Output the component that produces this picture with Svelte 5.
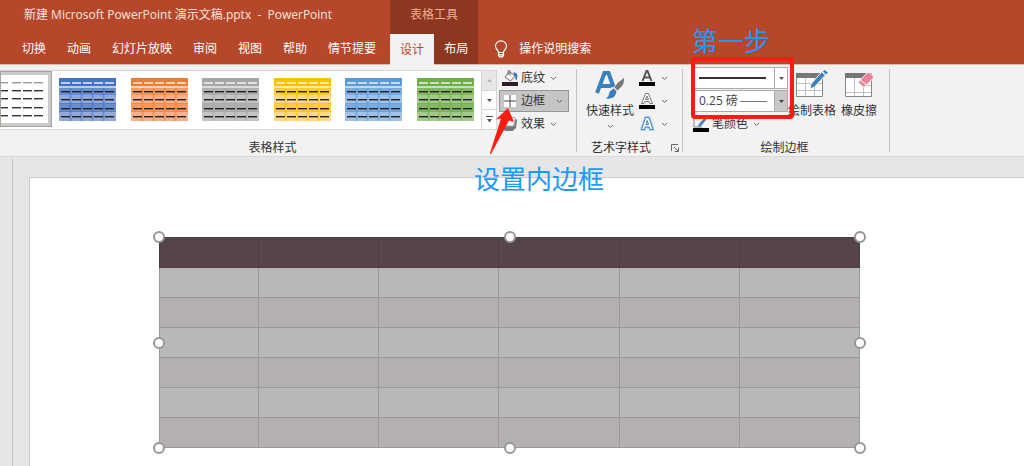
<script>
  const menus = ['切换', '动画', '幻灯片放映', '审阅', '视图', '帮助', '情节提要'];

  const styles = [
    { name: '蓝色', head: '#4472c4', odd: '#698ed0', even: '#93a9dc' },
    { name: '橙色', head: '#ed7d31', odd: '#f79a5e', even: '#f8b08c' },
    { name: '灰色', head: '#a5a5a5', odd: '#b0b0b0', even: '#c4c4c4' },
    { name: '金色', head: '#ffc000', odd: '#ffcb3c', even: '#ffd98a' },
    { name: '浅蓝', head: '#5b9bd5', odd: '#79ace0', even: '#a0c1e8' },
    { name: '绿色', head: '#70ad47', odd: '#82b962', even: '#a2cb8b' },
  ];

  const dashRows = [13, 21, 30, 38];
  const dashCols = [2, 13, 24, 35, 46];

  // handle positions in percent of the selected table
  const handles = [
    [0, 0], [50, 0], [100, 0],
    [0, 50], [100, 50],
    [0, 100], [50, 100], [100, 100],
  ];

  let selected = $state(-1);
  let penStyle = $state('solid');
  let penWidth = $state('0.25');
</script>

{#snippet chevron()}
  <svg class="chevron" width="7" height="5" viewBox="0 0 7 5" aria-hidden="true">
    <path d="M1 1l2.5 2.4L6 1" fill="none" stroke="#666" />
  </svg>
{/snippet}

<div class="window">
  <header>
    <div class="main-bar">
      <div class="title">新建 Microsoft PowerPoint 演示文稿.pptx &nbsp;-&nbsp; PowerPoint</div>
      <nav class="menus">
        {#each menus as menu}
          <button class="menu">{menu}</button>
        {/each}
      </nav>
    </div>
    <div class="context">
      <div class="context-title">表格工具</div>
      <div class="context-tabs">
        <button class="tab active">设计</button>
        <button class="tab">布局</button>
      </div>
    </div>
    <button class="search">
      <svg width="14" height="18" viewBox="0 0 14 18" fill="none" stroke="#fff" stroke-width="1.2" aria-hidden="true">
        <path d="M4.5 12.5C4.5 10 1.5 9.500 1.500 6a5.500 5.200 0 0 1 11 0c0 3.500-3 4-3 6.500v3l-1 1.300h-3l-1-1.300zM4.500 12.500h5M4.500 14.800h5" />
      </svg>
      操作说明搜索
    </button>
  </header>

  <div class="ribbon">
    <section class="group styles-group">
      <div class="tools">
        <div class="gallery">
          <button class="thumb current" aria-label="无样式" onclick={() => (selected = -1)}>
            <svg width="44" height="43" viewBox="0 0 44 43" aria-hidden="true">
              {#each [5, ...dashRows] as y, i}
                {#each [0, 12, 23, 34] as x}
                  <rect {x} {y} width={x ? 9 : 8} height="1.4" fill={i ? '#333' : '#999'} />
                {/each}
              {/each}
            </svg>
          </button>
          <div class="thumbs">
            {#each styles as style, i}
              <button class="thumb" aria-label={style.name} aria-pressed={selected === i} onclick={() => (selected = i)}>
                <svg width="57" height="43" viewBox="0 0 57 43" aria-hidden="true">
                  <rect width="57" height="43" fill={style.odd} />
                  <rect y="17" width="57" height="8" fill={style.even} />
                  <rect y="34" width="57" height="9" fill={style.even} />
                  <rect width="57" height="8" fill={style.head} />
                  <rect y="8" width="57" height="2" fill="#fff" opacity=".55" />
                  {#each [11.5, 22.5, 33.5, 44.5] as x}
                    <path d="M{x} 10v33" stroke={style.head} stroke-width="2" opacity=".5" />
                  {/each}
                  <path d="M0 25.500h57M0 33.500h57" stroke={style.head} opacity=".5" />
                  {#each dashCols as x}
                    <rect {x} y="4" width="9" height="2" fill="#fff" opacity=".65" />
                    {#each dashRows as y}
                      <rect {x} {y} width="9" height="1.400" fill="#222" />
                    {/each}
                  {/each}
                </svg>
              </button>
            {/each}
          </div>
          <div class="scroll">
            <button class="off" aria-label="上一行"><svg width="5" height="3" aria-hidden="true"><path d="M0 3h5L2.500 0z" fill="#b5b5b5" /></svg></button>
            <button aria-label="下一行"><svg width="5" height="3" aria-hidden="true"><path d="M0 0h5L2.500 3z" fill="#555" /></svg></button>
            <button aria-label="其他"><svg width="7" height="7" aria-hidden="true"><path d="M0 0h7v1H0zM1 3h5L3.500 6.500z" fill="#555" /></svg></button>
          </div>
        </div>
        <div class="stack">
          <button class="row-button">
            <svg width="17" height="16" viewBox="0 0 17 16" aria-hidden="true">
              <path d="M7.500 1.800l5.500 4.200-4.500 5-5.500-4z" fill="#fff" stroke="#666" />
              <path d="M6 5V1.500Q6 .5 7 .5t1 1V5.500" fill="none" stroke="#666" />
              <path d="M11 2.500q4-.5 4.300 2.500.3 3-.8 5.500-1.700-1.500-1.300-4.500z" fill="#3f78b5" />
              <path d="M0 12h16v4H0z" fill="#351c2b" />
            </svg>
            <span>底纹</span>{@render chevron()}
          </button>
          <button class="row-button pressed">
            <svg width="17" height="16" viewBox="0 0 17 16" aria-hidden="true">
              <path d="M1.500 1.500h13v13h-13z" fill="#fff" stroke="#aaa" stroke-dasharray="1 1" />
              <path d="M8 2v12M2 8h12" stroke="#444" />
            </svg>
            <span>边框</span>{@render chevron()}
          </button>
          <button class="row-button">
            <svg width="17" height="16" viewBox="0 0 17 16" aria-hidden="true">
              <path d="M5 2.500h8.500L15 4l-1 8-3.500 3H3l-2-2.500L2 9z" fill="#777" />
              <path d="M5.500 1.500h7q1 0 .8 1L12 9q-.2 1-1 1H4q-1 0-.8-1l1.300-6.500q.2-1 1-1z" fill="#fff" stroke="#aaa" />
            </svg>
            <span>效果</span>{@render chevron()}
          </button>
        </div>
      </div>
      <div class="caption">表格样式</div>
      <svg class="arrow" width="28" height="50" viewBox="0 0 28 50" aria-hidden="true">
        <path d="M20 2l6 14-5-1.500L3.500 47q-1.500 2-1.500 0L13 12.500 8 13.500z" fill="#ff1b10" />
      </svg>
    </section>

    <section class="group wordart">
      <div class="tools">
        <button class="big-button">
          <svg width="30" height="30" viewBox="0 0 30 30" aria-hidden="true">
            <path d="M2 23L9.500 3h4l5 14M5 16h11" fill="none" stroke="#3d7ebd" stroke-width="4" />
            <path d="M29 8q.5 5-2.500 8.500l-4 4-3-3 3-4.500z" fill="#777" />
            <path d="M18.500 18l3.500 3q-1 6-5 7.500t-7.500 0q4-1.500 4-4.500t5-6z" fill="#3d7ebd" stroke="#f2f2f2" />
          </svg>
          <span>快速样式</span>
          {@render chevron()}
        </button>
        <div class="stack">
          <button class="row-button" aria-label="文本填充">
            <svg width="17" height="16" viewBox="0 0 17 16" aria-hidden="true">
              <path d="M3.500 11L7.500 1h1l4 10M5 7.500h6" fill="none" stroke="#555" stroke-width="2" />
              <path d="M0 12h16v4H0z" />
            </svg>
            {@render chevron()}
          </button>
          <button class="row-button" aria-label="文本轮廓">
            <svg width="17" height="16" viewBox="0 0 17 16" aria-hidden="true">
              <path d="M2.500 10.500l4-10h3l4 10h-2.500l-.8-2H5.800l-.8 2zM6.500 6.500h3L8 3z" fill="#fff" stroke="#777" />
              <path d="M0 12h16v4H0z" />
            </svg>
            {@render chevron()}
          </button>
          <button class="row-button" aria-label="文本效果">
            <svg width="17" height="16" viewBox="0 0 17 16" aria-hidden="true">
              <path d="M2.500 13.500l4-12h3.500l4 12h-3l-.8-2.500H6.300l-.8 2.500z" fill="#fff" stroke="#b4d5f2" stroke-width="3" />
              <path d="M2.500 13.500l4-12h3.500l4 12h-3l-.8-2.500H6.300l-.8 2.500zM7 8.500h2.500L8.200 4.500z" fill="#fff" stroke="#3f7fbe" />
            </svg>
            {@render chevron()}
          </button>
        </div>
      </div>
      <div class="caption">艺术字样式</div>
      <button class="launcher" aria-label="艺术字样式设置">
        <svg width="8" height="8" viewBox="0 0 8 8" fill="none" stroke="#666" aria-hidden="true">
          <path d="M.5 7V.5H7M3 3l4 4M7.500 3.500v4h-4" />
        </svg>
      </button>
    </section>

    <section class="group borders">
      <div class="tools">
        <div class="stack pens">
          <div class="combo">
            <select class="pen-style" aria-label="笔样式" bind:value={penStyle}>
              <option value="solid"></option>
            </select>
            <span class="drop"><svg width="5" height="3" aria-hidden="true"><path d="M0 0h5L2.500 3z" fill="#555" /></svg></span>
          </div>
          <div class="combo">
            <select class="pen-width" aria-label="笔划粗细" bind:value={penWidth}>
              <option value="0.25">0.25 磅</option>
            </select>
            <span class="drop dark"><svg width="5" height="3" aria-hidden="true"><path d="M0 0h5L2.500 3z" fill="#444" /></svg></span>
          </div>
          <button class="row-button">
            <svg width="17" height="16" viewBox="0 0 17 16" aria-hidden="true">
              <path d="M1 1v10h8" fill="none" stroke="#888" />
              <path d="M13 0l2 1.500-7 8.500-3 1 1-3z" fill="#3f7fbe" />
              <path d="M0 12h16v4H0z" />
            </svg>
            <span>笔颜色</span>{@render chevron()}
          </button>
        </div>
        <button class="big-button draw">
          <svg width="32" height="30" viewBox="0 0 32 30" aria-hidden="true">
            <path d="M.5 4.500h26v22H.5z" fill="#fff" stroke="#888" />
            <path d="M1 13.500h25M1 20.500h25M9.500 8v18M18.500 8v18" stroke="#c0c0c0" />
            <path d="M0 3h27v5H0z" fill="#777" />
            <path d="M25.500 2l4 3-11 12-4.500 2 1-5z" fill="#3f7fbe" stroke="#f2f2f2" />
            <path d="M27 1.500L28.500 0 32 2.500l-2 2z" fill="#3f7fbe" />
          </svg>
          <span>绘制表格</span>
        </button>
        <button class="big-button">
          <svg width="30" height="30" viewBox="0 0 30 30" aria-hidden="true">
            <path d="M1.500 4.500h26v22h-26z" fill="#fff" stroke="#888" />
            <path d="M2 22.500h25M10.500 8v18M19.500 8v18M19 15.500h8" stroke="#c0c0c0" />
            <path d="M1 3h27v5H1z" fill="#777" />
            <path d="M23 3q1.500-1 3 0l3 2.500q1 1.500 0 3L20 17.500l-6-5z" fill="#ea8398" stroke="#f2f2f2" />
            <path d="M16.500 10l6 5" stroke="#fff" />
          </svg>
          <span>橡皮擦</span>
        </button>
      </div>
      <div class="caption">绘制边框</div>
      <div class="highlight"></div>
      <div class="note note-one">第一步</div>
    </section>
  </div>

  <main>
    <div class="note note-two">设置内边框</div>
    <div class="outline"></div>
    <div class="slide">
      <div class="selection">
        <table aria-label="幻灯片表格">
          <thead>
            <tr>{#each { length: 6 } as _}<th></th>{/each}</tr>
          </thead>
          <tbody>
            {#each { length: 6 } as _}
              <tr>{#each { length: 6 } as _}<td></td>{/each}</tr>
            {/each}
          </tbody>
        </table>
        {#each handles as [x, y]}
          <span class="handle" style="left: {x}%; top: {y}%"></span>
        {/each}
      </div>
    </div>
  </main>
</div>

<style>
  :global(body) {
    margin: 0;
  }
  .window {
    display: flex;
    flex-direction: column;
    min-height: 100vh;
    overflow: hidden;
    background: #e6e6e6;
    color: #333;
    font: 12px/16px "Open Sans", "Noto Sans CJK SC", sans-serif;
  }
  button {
    padding: 0;
    border: 0;
    background: none;
    color: inherit;
    font: inherit;
    white-space: nowrap;
  }
  svg {
    display: block;
    flex: none;
  }

  /* title bar and tabs */
  header {
    display: flex;
    background: #b7472a;
    border-bottom: 1px solid #e3b9ae;
    color: #fff;
  }
  .main-bar {
    padding: 0 14px 0 22px;
  }
  .title {
    padding: 7px 2px 11px;
    color: #fbe6df;
    white-space: nowrap;
  }
  .menus {
    display: flex;
    gap: 21px;
    height: 30px;
  }
  .context {
    background: #8e3720;
  }
  .context-title {
    padding: 7px 0 11px;
    color: #f0ac90;
    text-align: center;
  }
  .context-tabs {
    display: flex;
  }
  .tab {
    height: 30px;
    padding: 0 10px;
  }
  .tab.active {
    height: 31px;
    margin-bottom: -1px;
    background: #f2f2f2;
    color: #b7472a;
  }
  .search {
    display: flex;
    align-items: center;
    align-self: flex-end;
    gap: 11px;
    height: 30px;
    padding-left: 16px;
  }

  /* ribbon */
  .ribbon {
    display: flex;
    height: 91px;
    background: #f2f2f2;
    border-bottom: 1px solid #d9d9d9;
  }
  .group {
    position: relative;
    display: flex;
    flex-direction: column;
    padding-top: 2px;
  }
  .group::after {
    content: "";
    position: absolute;
    top: 4px;
    right: 0;
    bottom: 4px;
    width: 1px;
    background: #c3c3c3;
  }
  .tools {
    display: flex;
    height: 73px;
  }
  .caption {
    text-align: center;
  }
  .styles-group {
    width: 577px;
  }
  .styles-group .caption {
    padding-right: 32px;
  }
  .gallery {
    display: flex;
    flex: 1;
    height: 58px;
    margin: 3px 2px 0 0;
    border: 1px solid #d6d6d6;
    border-left: 0;
    background: #fff;
  }
  .thumbs {
    display: grid;
    grid-template-columns: repeat(6, 1fr);
    flex: 1;
    padding-bottom: 2px;
  }
  .thumb {
    display: flex;
    align-items: center;
    justify-content: center;
  }
  .thumb.current {
    box-sizing: border-box;
    width: 52px;
    height: 56px;
    padding-bottom: 2px;
    justify-content: flex-start;
    border: 4px solid #cacbc6;
    border-left: 0;
    outline: 1px solid #a3a49f;
    outline-offset: -1px;
  }
  .scroll {
    display: flex;
    flex-direction: column;
    width: 15px;
  }
  .scroll button {
    display: flex;
    flex: 1;
    align-items: center;
    justify-content: center;
    border-left: 1px solid #d6d6d6;
  }
  .scroll button + button {
    border-top: 1px solid #d6d6d6;
  }
  .scroll .off {
    background: #e6e6e6;
  }
  .stack {
    display: flex;
    flex-direction: column;
    gap: 1px;
  }
  .styles-group .stack {
    width: 70px;
    margin-right: 8px;
  }
  .row-button {
    display: flex;
    align-items: center;
    height: 22px;
    padding-left: 3px;
  }
  .row-button .chevron {
    margin-left: 5px;
  }
  .row-button span {
    margin-left: 2px;
  }
  .row-button.pressed {
    padding-left: 2px;
    border: 1px solid #969696;
    background: #c5c5c5;
  }
  .pressed .chevron {
    margin-left: 11px;
  }
  .big-button {
    display: flex;
    flex-direction: column;
    align-items: center;
    height: 65px;
    padding-top: 3px;
  }
  .big-button span {
    margin: 3px 0 5px;
  }
  .wordart {
    width: 106px;
  }
  .wordart .tools {
    padding-left: 9px;
  }
  .wordart .caption {
    padding-right: 18px;
  }
  .wordart .row-button {
    padding-left: 5px;
  }
  .launcher {
    position: absolute;
    right: 4px;
    bottom: 4px;
  }
  .borders {
    width: 207px;
  }
  .borders .tools {
    padding-left: 10px;
  }
  .borders .caption {
    padding-right: 4px;
  }
  .pens {
    width: 95px;
  }
  .pens .row-button {
    padding-left: 0;
  }
  .combo {
    display: grid;
    height: 22px;
    border: 1px solid #ababab;
    box-sizing: border-box;
    background: #fff;
  }
  .combo select,
  .drop {
    grid-area: 1 / 1;
  }
  .combo select {
    appearance: none;
    min-width: 0;
    padding: 0 0 0 5px;
    border: 0;
    border-radius: 0;
    color: #444;
    font: inherit;
    background-color: #fff;
    background-repeat: no-repeat;
  }
  .pen-style {
    background-image: linear-gradient(#333, #333);
    background-position: 5px center;
    background-size: 67px 2px;
  }
  .pen-width {
    background-image: linear-gradient(#777, #777);
    background-position: 46px center;
    background-size: 27px 1px;
  }
  .drop {
    display: flex;
    align-items: center;
    justify-content: center;
    justify-self: end;
    width: 12px;
    border-left: 1px solid #ababab;
    pointer-events: none;
  }
  .drop.dark {
    background: #c8c8c8;
  }
  .draw {
    margin-right: 5px;
  }

  /* tutorial marks drawn over the window */
  .arrow {
    position: absolute;
    top: 41px;
    left: 488px;
    z-index: 2;
  }
  .highlight {
    position: absolute;
    top: -8px;
    left: 8px;
    box-sizing: border-box;
    width: 103px;
    height: 62px;
    border: 4px solid #ff1b10;
    border-radius: 4px;
  }
  .note {
    position: absolute;
    color: #1e97ff;
    font-size: 26px;
    line-height: 32px;
    white-space: nowrap;
  }
  .note-one {
    top: -40px;
    left: 9px;
  }
  .note-two {
    top: 6px;
    left: 474px;
    z-index: 1;
  }

  /* editing area */
  main {
    position: relative;
    display: flex;
    flex: 1;
    gap: 16px;
  }
  .outline {
    width: 12px;
    margin-top: 2px;
    border-right: 1px solid #c3c3c3;
  }
  .slide {
    flex: 1;
    margin-top: 20px;
    padding: 59px 164px 17px 129px;
    border: solid #cbcbcb;
    border-width: 1px 0 0 1px;
    background: #fff;
  }
  .selection {
    position: relative;
  }
  table {
    width: 100%;
    border-collapse: collapse;
    table-layout: fixed;
    border: 1px solid #969696;
  }
  th,
  td {
    height: 29px;
    padding: 0;
    border: 1px solid #999;
  }
  th {
    border-color: #4c3e43;
    background: #55454b;
  }
  th:first-child,
  td:first-child {
    width: 14%;
  }
  tbody tr {
    background: #b8b8b8;
  }
  tbody tr:nth-child(even) {
    background: #b4afb0;
  }
  .handle {
    position: absolute;
    box-sizing: border-box;
    width: 12px;
    height: 12px;
    margin: -6px;
    border: 2px solid #979797;
    border-radius: 50%;
    background: #fff;
  }
</style>
